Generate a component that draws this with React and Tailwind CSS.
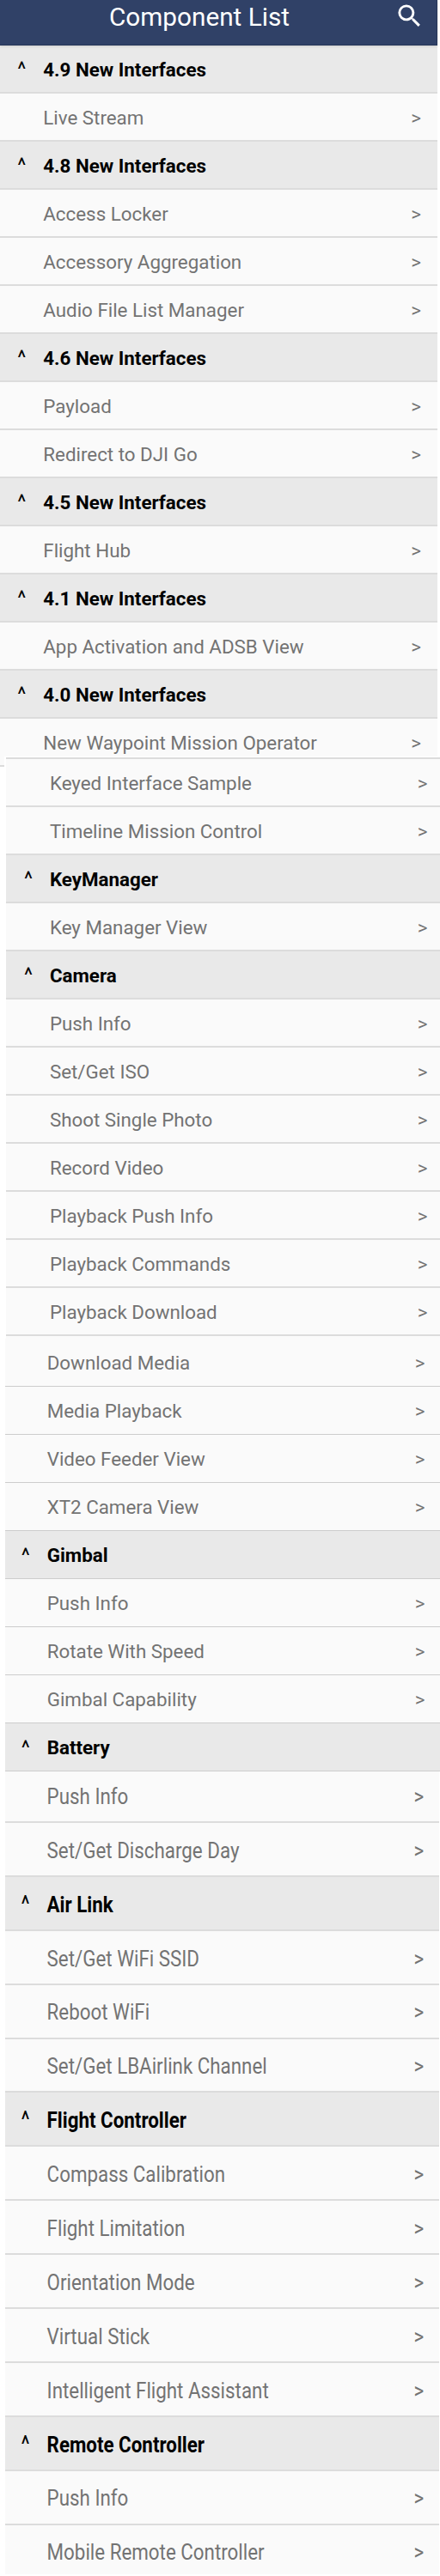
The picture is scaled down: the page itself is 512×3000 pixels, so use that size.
import React from "react";

const intro = [
  ["h", "4.9 New Interfaces"],
  ["i", "Live Stream"],
  ["h", "4.8 New Interfaces"],
  ["i", "Access Locker"],
  ["i", "Accessory Aggregation"],
  ["i", "Audio File List Manager"],
  ["h", "4.6 New Interfaces"],
  ["i", "Payload"],
  ["i", "Redirect to DJI Go"],
  ["h", "4.5 New Interfaces"],
  ["i", "Flight Hub"],
  ["h", "4.1 New Interfaces"],
  ["i", "App Activation and ADSB View"],
  ["h", "4.0 New Interfaces"],
  ["i", "New Waypoint Mission Operator"],
];

const camera = [
  ["i", "Keyed Interface Sample"],
  ["i", "Timeline Mission Control"],
  ["h", "KeyManager"],
  ["i", "Key Manager View"],
  ["h", "Camera"],
  ["i", "Push Info"],
  ["i", "Set/Get ISO"],
  ["i", "Shoot Single Photo"],
  ["i", "Record Video"],
  ["i", "Playback Push Info"],
  ["i", "Playback Commands"],
  ["i", "Playback Download"],
];

const media = [
  ["i", "Download Media"],
  ["i", "Media Playback"],
  ["i", "Video Feeder View"],
  ["i", "XT2 Camera View"],
  ["h", "Gimbal"],
  ["i", "Push Info"],
  ["i", "Rotate With Speed"],
  ["i", "Gimbal Capability"],
  ["h", "Battery"],
];

const flight = [
  ["i", "Push Info"],
  ["i", "Set/Get Discharge Day"],
  ["h", "Air Link"],
  ["i", "Set/Get WiFi SSID"],
  ["i", "Reboot WiFi"],
  ["i", "Set/Get LBAirlink Channel"],
  ["h", "Flight Controller"],
  ["i", "Compass Calibration"],
  ["i", "Flight Limitation"],
  ["i", "Orientation Mode"],
  ["i", "Virtual Stick"],
  ["i", "Intelligent Flight Assistant"],
  ["h", "Remote Controller"],
  ["i", "Push Info"],
  ["i", "Mobile Remote Controller"],
];

function Row({ kind, label, row, text = "" }) {
  const heading = kind === "h";
  return (
    <div
      className={`flex shrink-0 items-center leading-none ${row} ${
        heading ? "bg-[#e9e9e9] text-black" : "bg-[#fafafa] text-[#737373]"
      }`}
    >
      <span className={`w-[30px] shrink-0 text-[24px] ${text}`}>{heading ? "^" : ""}</span>
      <span className={`grow whitespace-nowrap ${heading ? "font-bold" : ""} ${text}`}>{label}</span>
      {!heading && <span className={text}>&gt;</span>}
    </div>
  );
}

function Rows({ items, row, text }) {
  return items.map(([kind, label], i) => <Row key={i} kind={kind} label={label} row={row} text={text} />);
}

export default function App() {
  return (
    <div className="flex h-[3000px] w-[512px] flex-col overflow-hidden bg-white font-['Roboto',sans-serif] text-[22.35px]">
      <header className="z-10 flex h-[53px] w-[509px] shrink-0 items-start border-r border-b border-[#263659] bg-[#304167] pl-[127px] text-white shadow-[0_1px_3px_rgba(0,0,0,0.12)]">
        <h1 className="w-[331.5px] text-[29.72px] leading-[40px]">Component List</h1>
        <svg className="mt-[0.5px] size-[35px]" viewBox="0 0 24 24" fill="currentColor">
          <path d="M15.5 14h-.79l-.28-.27A6.471 6.471 0 0 0 16 9.5 6.5 6.5 0 1 0 9.5 16c1.61 0 3.09-.59 4.23-1.57l.27.28v.79l5 4.99L20.49 19l-4.99-5zm-6 0C7.01 14 5 11.99 5 9.5S7.01 5 9.5 5 14 7.01 14 9.5 11.99 14 9.5 14z" />
        </svg>
      </header>

      <section className="flex h-[828px] w-[509px] shrink-0 flex-col overflow-hidden">
        <Rows items={intro} row="h-[55.97px] border-b-2 border-[#dcdcdc] pt-[3px] pl-[20.3px] pr-[19.1px]" />
      </section>

      <div className="flex h-[678px] shrink-0">
        <div className="h-[12px] w-[5px] shrink-0 border-b-2 border-[#dcdcdc] bg-[#fafafa]" />
        <section className="ml-[2px] flex grow flex-col bg-[#fafafa]">
          <div className="h-[3px] shrink-0 border-b-2 border-[#dcdcdc] bg-white" />
          <Rows items={camera} row="h-[55.97px] border-b-2 border-[#dcdcdc] pt-[2.4px] pl-[20.9px] pr-[14.5px]" />
        </section>
      </div>

      <section className="ml-[6px] flex shrink-0 flex-col bg-[#fafafa]">
        <Rows items={media} row="h-[56.01px] border-b border-[#cdcdcd] pt-[2px] pl-[18.7px] pr-[17.5px]" />
      </section>

      <section className="ml-[6px] mr-[1px] flex h-[60px] shrink-0 flex-col justify-end overflow-hidden">
        <Rows
          items={flight.slice(0, 1)}
          row="h-[62.9px] border-b-2 border-[#dcdcdc] pt-[3px] pl-[18.6px] pr-[17.8px]"
          text="scale-y-[1.125]"
        />
      </section>

      <section className="ml-[6px] mr-[1px] flex h-[875px] shrink-0 flex-col overflow-hidden">
        <Rows
          items={flight.slice(1)}
          row="h-[62.9px] border-b-2 border-[#dcdcdc] pt-[3px] pl-[18.6px] pr-[17.8px]"
          text="scale-y-[1.125]"
        />
      </section>
    </div>
  );
}
